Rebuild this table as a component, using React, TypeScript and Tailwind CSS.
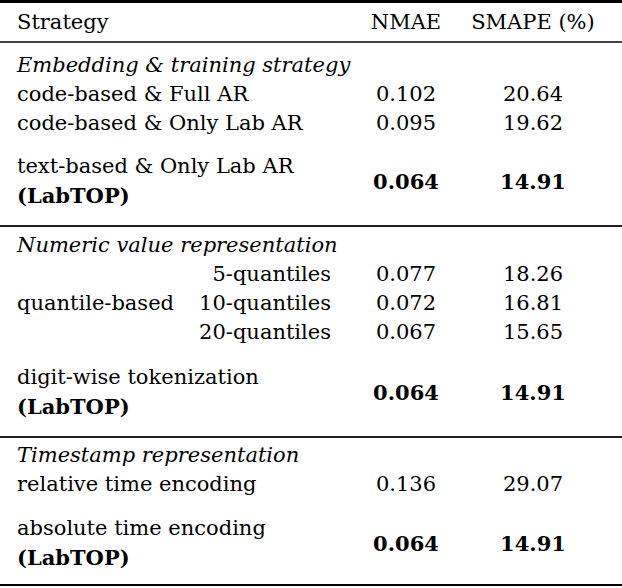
type Row = {
  label: React.ReactNode;
  nmae?: string;
  smape?: string;
};

const Num = ({ v, bold }: { v?: string; bold?: boolean }) => (
  <div className={`flex items-center justify-center ${bold ? "font-bold" : ""}`}>{v}</div>
);

const Line = ({ children }: { children: React.ReactNode }) => (
  <div className="h-[29px] flex items-center whitespace-nowrap">{children}</div>
);

const SimpleRow = ({ label, nmae, smape }: Row) => (
  <div className="grid grid-cols-[356px_100px_154px] h-[29px] items-center">
    <div className="pl-[17px] whitespace-nowrap">{label}</div>
    <Num v={nmae} />
    <Num v={smape} />
  </div>
);

const BestRow = ({ first }: { first: string }) => (
  <div className="grid grid-cols-[356px_100px_154px]">
    <div className="pl-[17px]">
      <Line>{first}</Line>
      <Line>
        <span className="font-bold">(LabTOP)</span>
      </Line>
    </div>
    <Num v="0.064" bold />
    <Num v="14.91" bold />
  </div>
);

const Title = ({ children }: { children: React.ReactNode }) => (
  <div className="h-[29px] flex items-center pl-[17px] italic whitespace-nowrap">{children}</div>
);

export default function App() {
  return (
    <div className="w-[622px] h-[588px] bg-white text-black text-[21px] leading-none font-['DejaVu_Serif']">
      <div className="border-t-[3px] border-black" />
      <div className="grid grid-cols-[356px_100px_154px] h-[38px] items-center">
        <div className="pl-[17px]">Strategy</div>
        <div className="text-center">NMAE</div>
        <div className="text-center">SMAPE (%)</div>
      </div>
      <div className="border-t-2 border-[#444]" />

      {/* embedding & training */}
      <div className="pt-[8px]">
        <Title>Embedding &amp; training strategy</Title>
        <SimpleRow label="code-based & Full AR" nmae="0.102" smape="20.64" />
        <SimpleRow label="code-based & Only Lab AR" nmae="0.095" smape="19.62" />
        <div className="h-[14px]" />
        <BestRow first="text-based & Only Lab AR" />
        <div className="h-[15px]" />
      </div>
      <div className="border-t-2 border-[#222]" />

      {/* numeric value */}
      <div className="pt-[4px]">
        <Title>Numeric value representation</Title>
        <div className="grid grid-cols-[356px_100px_154px]">
          <div className="pl-[17px] grid grid-cols-[auto_1fr] items-center">
            <div className="whitespace-nowrap">quantile-based</div>
            <div className="pr-[25px]">
              <Line>
                <span className="ml-auto">5-quantiles</span>
              </Line>
              <Line>
                <span className="ml-auto">10-quantiles</span>
              </Line>
              <Line>
                <span className="ml-auto">20-quantiles</span>
              </Line>
            </div>
          </div>
          <div>
            <Line>
              <span className="mx-auto">0.077</span>
            </Line>
            <Line>
              <span className="mx-auto">0.072</span>
            </Line>
            <Line>
              <span className="mx-auto">0.067</span>
            </Line>
          </div>
          <div>
            <Line>
              <span className="mx-auto">18.26</span>
            </Line>
            <Line>
              <span className="mx-auto">16.81</span>
            </Line>
            <Line>
              <span className="mx-auto">15.65</span>
            </Line>
          </div>
        </div>
        <div className="h-[16px]" />
        <BestRow first="digit-wise tokenization" />
        <div className="h-[15px]" />
      </div>
      <div className="border-t-2 border-[#222]" />

      {/* timestamp */}
      <div className="pt-[3px]">
        <Title>Timestamp representation</Title>
        <SimpleRow label="relative time encoding" nmae="0.136" smape="29.07" />
        <div className="h-[15px]" />
        <BestRow first="absolute time encoding" />
        <div className="h-[12px]" />
      </div>
      <div className="border-t-2 border-black" />
    </div>
  );
}
